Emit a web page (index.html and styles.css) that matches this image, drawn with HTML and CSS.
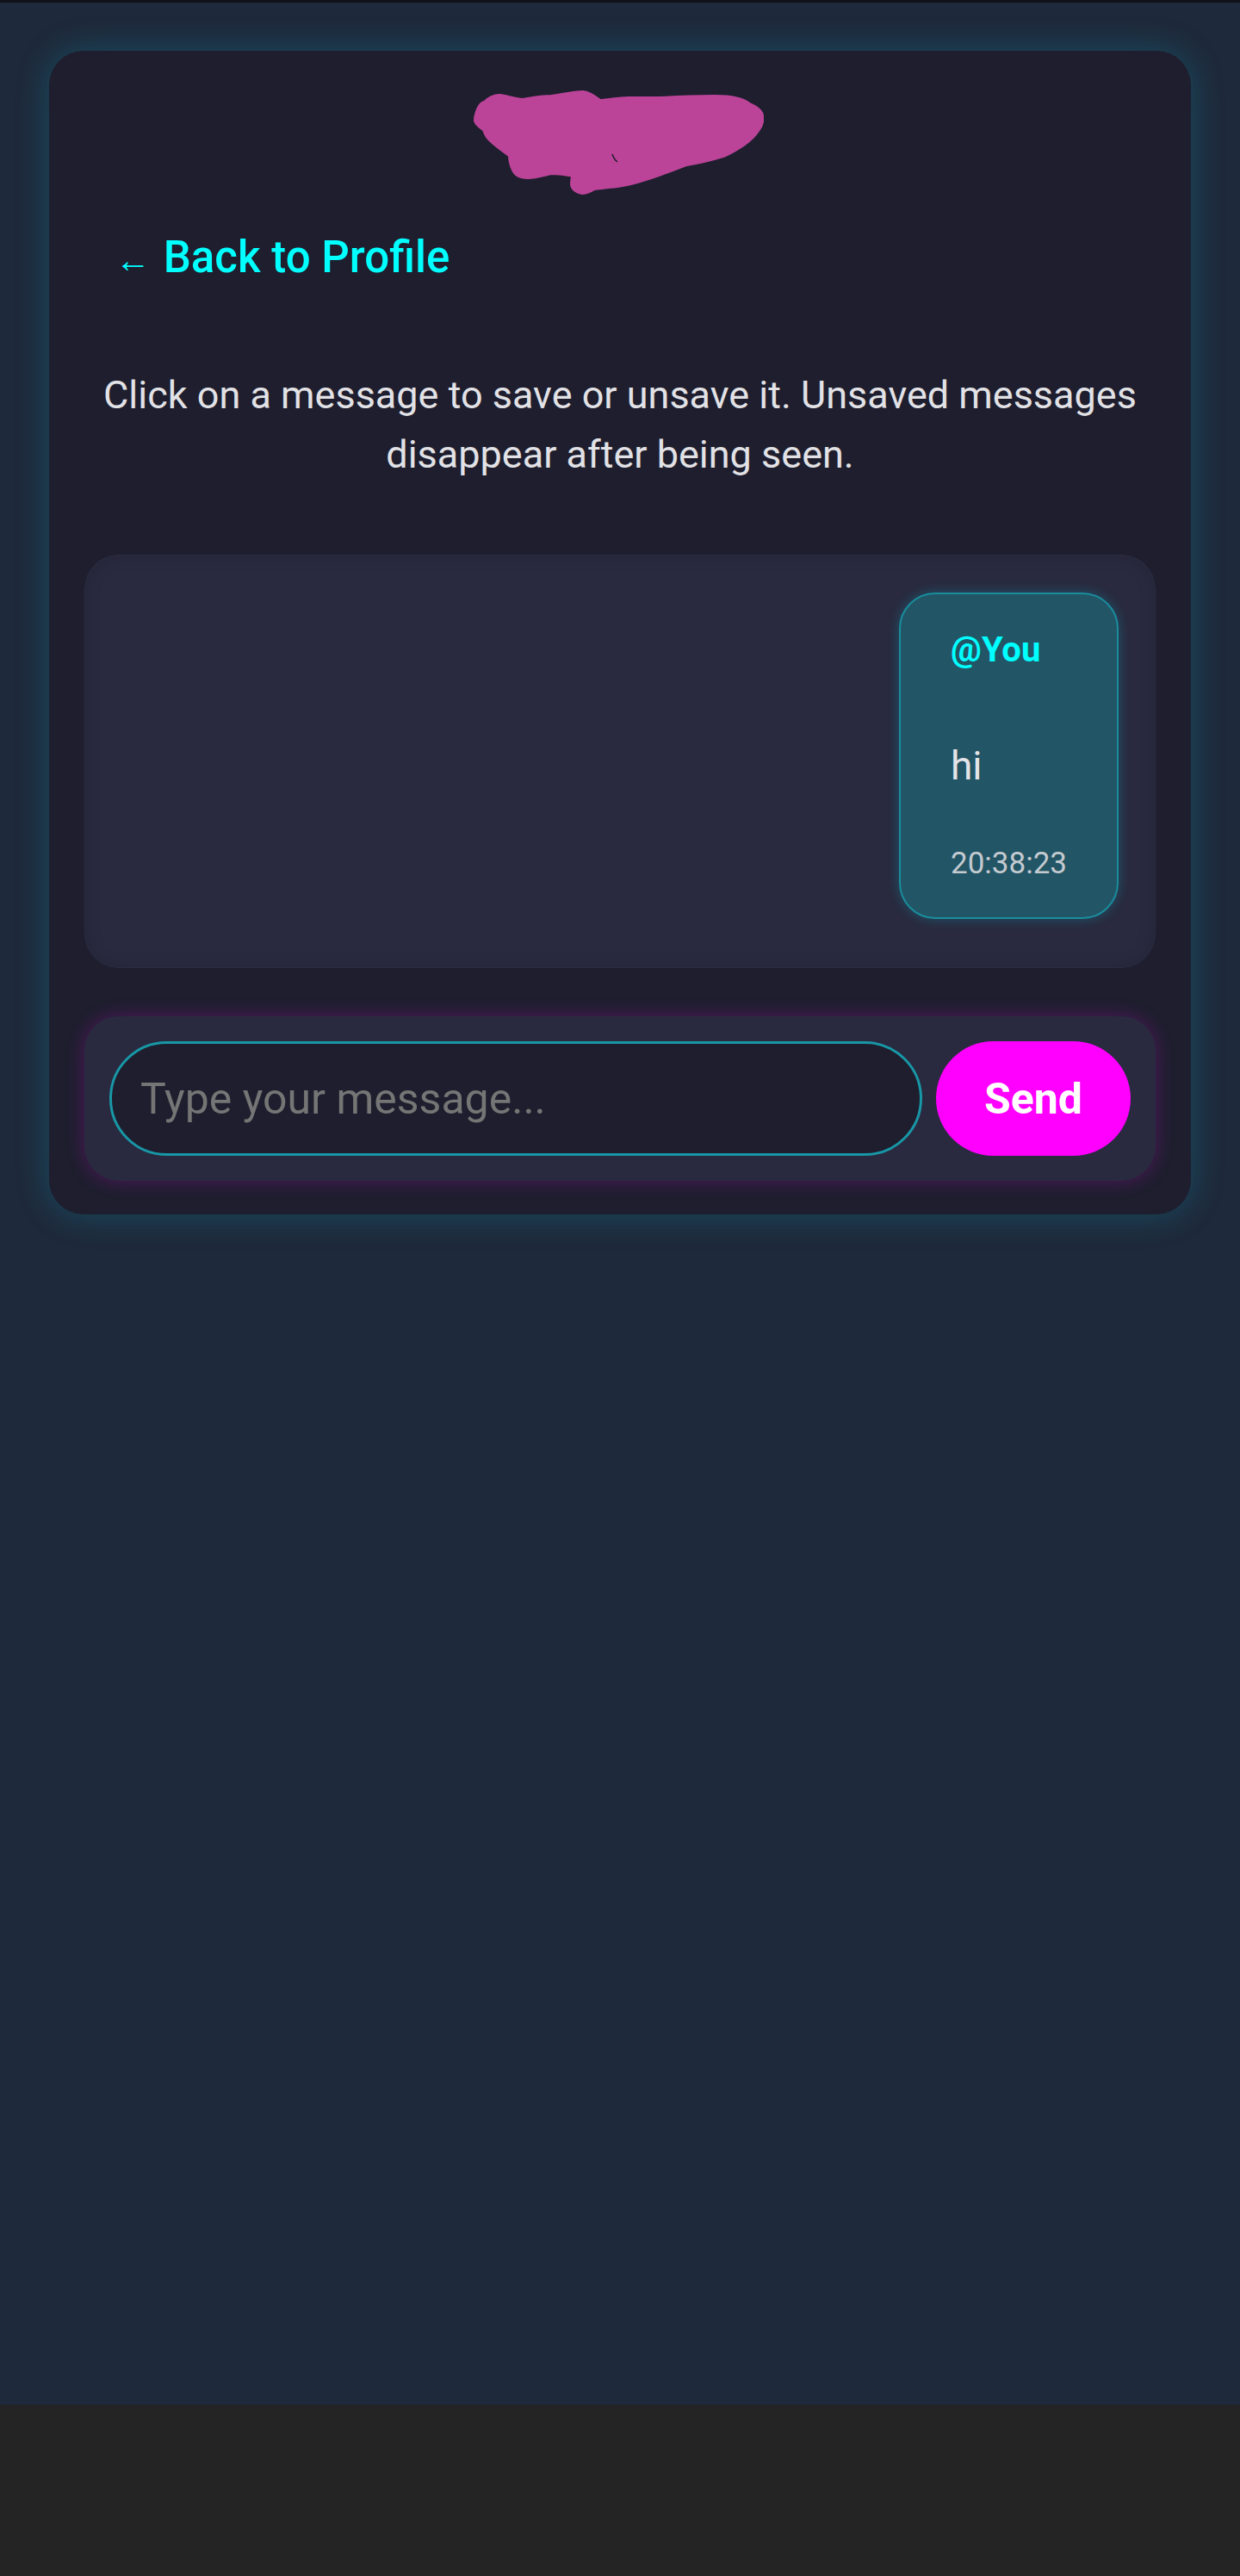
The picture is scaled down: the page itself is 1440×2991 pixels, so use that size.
FILE: index.html
```html
<!DOCTYPE html>
<html lang="en">
<head>
<meta charset="utf-8">
<title>Chat</title>
<link rel="stylesheet" href="styles.css">
</head>
<body>
<div class="page">
  <main class="card">
    <div class="title-redacted" aria-hidden="true">
      <svg width="338" height="122" viewBox="0 0 338 122">
        <g fill="#bb4499" stroke="#bb4499" stroke-linecap="round" stroke-linejoin="round">
          <path stroke-width="6" d="M5 28 C8 18 12 15 14 15 C20 9 26 7 31 7 C40 8 50 12 58 12 C70 10 80 8 91 8 C105 6 118 3 128 3 C138 4 143 11 148 13 C160 12 170 10 181 10 C195 10 205 10 214 10 C240 9 260 8 281 8 C300 8 314 11 321 17 C330 21 335 25 335 30 C336 36 334 41 331 45 C326 53 320 58 314 62 C305 68 298 72 291 75 C275 80 262 83 248 85 C230 92 214 98 198 103 C186 107 177 109 168 110 C158 111 150 112 141 113 C136 116 132 118 128 118 C120 117 116 113 116 108 C116 104 117 100 118 98 C108 96 100 95 91 95 C82 97 72 100 64 100 C56 100 50 97 48 92 C45 86 44 80 44 75 C34 68 26 62 21 57 C17 53 15 49 14 45 C8 41 5 38 4 35 C4 32 4 30 5 28 Z"/>
          <path stroke-width="22" fill="none" d="M16 28 L40 20"/>
          <path stroke-width="20" fill="none" d="M58 86 L62 92"/>
          <path stroke-width="20" fill="none" d="M125 104 L128 108"/>
        </g>
        <path d="M162 74 Q164 80 168 83" fill="none" stroke="#1e1e2e" stroke-width="1.5"/>
      </svg>
    </div>

    <a class="back-link" href="#"><span class="arrow">←</span> Back to Profile</a>

    <p class="hint">Click on a message to save or unsave it. Unsaved messages disappear after being seen.</p>

    <section class="messages">
      <div class="bubble">
        <div class="bubble-user">@You</div>
        <div class="bubble-text">hi</div>
        <div class="bubble-time">20:38:23</div>
      </div>
    </section>

    <form class="composer" onsubmit="return false;">
      <input class="composer-input" type="text" placeholder="Type your message...">
      <button class="composer-send" type="submit">Send</button>
    </form>
  </main>
</div>
</body>
</html>
```

FILE: styles.css
```css
html {
  background: #242424;
}

body {
  margin: 0;
  font-family: Roboto, "Noto Sans", "Liberation Sans", sans-serif;
  background: #242424;
}

.page {
  min-height: 2792px;
  background: #1e293b;
  border-top: 3px solid #0f1219;
  padding: 56px 57px 0;
  box-sizing: border-box;
}

.card {
  background: #1e1e2e;
  border-radius: 40px;
  padding: 40px 41px 39px;
  box-shadow: 0 0 40px rgba(0, 210, 230, 0.22);
  display: flex;
  flex-direction: column;
}

.title-redacted {
  margin-top: 6px;
  height: 122px;
  display: flex;
  justify-content: center;
}

.title-redacted svg {
  display: block;
  margin-left: -4px;
}

.back-link {
  margin-top: 42px;
  align-self: flex-start;
  padding-left: 36px;
  font-size: 51px;
  line-height: 60px;
  font-weight: 500;
  color: #00ffff;
  text-decoration: none;
}

.back-link .arrow {
  font-size: 41px;
  font-weight: 300;
  margin-right: 2px;
}

.hint {
  margin: 92px 0 0;
  font-size: 45px;
  line-height: 69px;
  text-align: center;
  color: #e2e2e6;
}

.messages {
  margin-top: 82px;
  background: #292a3f;
  border-radius: 40px;
  padding: 44px 43px 57px;
  display: flex;
  flex-direction: column;
  align-items: flex-end;
  box-shadow: inset 0 0 20px rgba(0, 0, 0, 0.15), inset 0 0 0 1px rgba(120, 160, 190, 0.06);
}

.bubble {
  background: #225565;
  border: 2px solid #1a8d9d;
  border-radius: 42px;
  padding: 41px 58px;
  box-shadow: 0 0 14px rgba(0, 220, 240, 0.25);
}

.bubble-user {
  font-size: 40px;
  line-height: 48px;
  font-weight: 700;
  color: #00ffff;
}

.bubble-text {
  margin-top: 83px;
  font-size: 46px;
  line-height: 55px;
  color: #e4e4e8;
}

.bubble-time {
  margin-top: 65px;
  font-size: 35px;
  line-height: 42px;
  color: #c4cad0;
}

.composer {
  margin: 56px 0 0;
  background: #292a3f;
  border-radius: 40px;
  padding: 29px;
  display: flex;
  gap: 16px;
  box-shadow: 0 0 22px rgba(255, 0, 255, 0.22);
}

.composer-input {
  flex: 1;
  min-width: 0;
  height: 133px;
  box-sizing: border-box;
  border-radius: 67px;
  border: 3px solid #1897a6;
  background: #1e1e2e;
  padding: 0 33px;
  font-family: Roboto, "Noto Sans", sans-serif;
  font-size: 50px;
  color: #e0e0e0;
  outline: none;
}

.composer-input::placeholder {
  color: #757575;
}

.composer-send {
  width: 226px;
  height: 133px;
  border: none;
  border-radius: 67px;
  background: #ff00ff;
  color: #ffffff;
  font-family: Roboto, "Noto Sans", sans-serif;
  font-size: 50px;
  font-weight: 700;
  padding: 0;
}
```
